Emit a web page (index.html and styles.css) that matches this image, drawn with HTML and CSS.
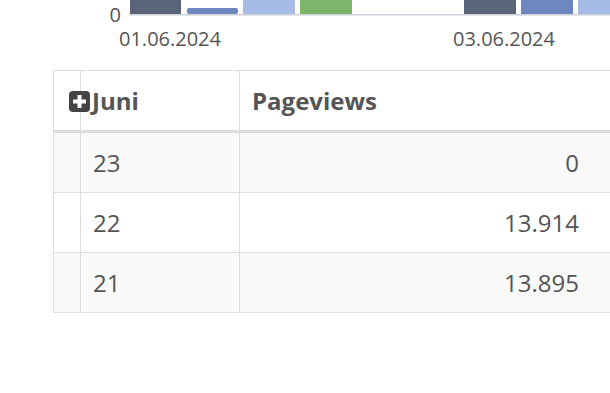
FILE: index.html
```
<!DOCTYPE html>
<html lang="de">
<head>
<meta charset="utf-8">
<title>Pageviews Juni</title>
<link rel="stylesheet" href="styles.css">
</head>
<body>
<div class="chart">
  <svg class="chart-svg" width="610" height="70" viewBox="0 0 610 70" xmlns="http://www.w3.org/2000/svg">
    <rect x="130" y="-4" width="51" height="18" fill="#5a6479"/>
    <rect x="187" y="8" width="51" height="6" rx="2" fill="#6e87c1"/>
    <rect x="243" y="-4" width="52" height="18" fill="#a7bce5"/>
    <rect x="300" y="-4" width="52" height="18" fill="#7db56a"/>
    <rect x="464" y="-4" width="52" height="18" fill="#5a6479"/>
    <rect x="521" y="-4" width="52" height="18" fill="#6e87c1"/>
    <rect x="578" y="-4" width="40" height="18" fill="#a7bce5"/>
    <rect x="129" y="14" width="481" height="1.5" fill="#ccd0d8"/>
    <text class="axis-y" x="121" y="22" text-anchor="end">0</text>
    <text class="axis-x" x="170" y="46" text-anchor="middle">01.06.2024</text>
    <text class="axis-x" x="504" y="46" text-anchor="middle">03.06.2024</text>
  </svg>
</div>
<table class="stats">
  <thead>
    <tr>
      <th class="c-ctrl"></th>
      <th class="c-day"><span class="expand"><svg width="21" height="21" viewBox="0 0 21 21"><rect x="0" y="0" width="21" height="21" rx="4" fill="#444"/><rect x="4" y="8.5" width="13" height="4" fill="#fff"/><rect x="8.5" y="4" width="4" height="13" fill="#fff"/></svg></span>Juni</th>
      <th class="c-num">Pageviews</th>
    </tr>
  </thead>
  <tbody>
    <tr class="odd"><td class="c-ctrl"></td><td class="c-day">23</td><td class="c-num">0</td></tr>
    <tr class="even"><td class="c-ctrl"></td><td class="c-day">22</td><td class="c-num">13.914</td></tr>
    <tr class="odd"><td class="c-ctrl"></td><td class="c-day">21</td><td class="c-num">13.895</td></tr>
  </tbody>
</table>
</body>
</html>
```
FILE: styles.css
```
html, body {
  margin: 0;
  padding: 0;
  background: #fff;
  overflow: hidden;
}
body {
  font-family: "Open Sans", "Liberation Sans", sans-serif;
  color: #555;
  width: 610px;
  height: 393px;
}
.chart {
  height: 70px;
}
.chart-svg {
  display: block;
}
.axis-x, .axis-y {
  font-family: "Open Sans", "Liberation Sans", sans-serif;
  font-size: 20px;
  fill: #555;
}
.stats {
  margin-left: 53px;
  width: 560px;
  border-collapse: separate;
  border-spacing: 0;
  table-layout: fixed;
  font-size: 24px;
  line-height: 33px;
}
.stats th, .stats td {
  box-sizing: border-box;
  padding: 13px 12px;
  border-left: 1px solid #ddd;
  border-bottom: 1px solid #ddd;
  text-align: left;
}
.stats th {
  font-weight: 700;
  border-top: 1px solid #ddd;
  border-bottom: 3px solid #ddd;
}
.stats .c-ctrl { width: 27px; padding: 0; }
.stats .c-day { width: 159px; }
.stats th.c-day { position: relative; padding-left: 11px; }
.stats .c-num { width: 374px; padding-right: 34px; }
.stats td.c-num { text-align: right; }
.stats tr.odd td { background: #f9f9f9; }
.stats tr.even td { background: #fff; }
.expand {
  position: absolute;
  left: -12px;
  top: 20px;
  width: 21px;
  height: 21px;
}
.expand svg { display: block; }
```
